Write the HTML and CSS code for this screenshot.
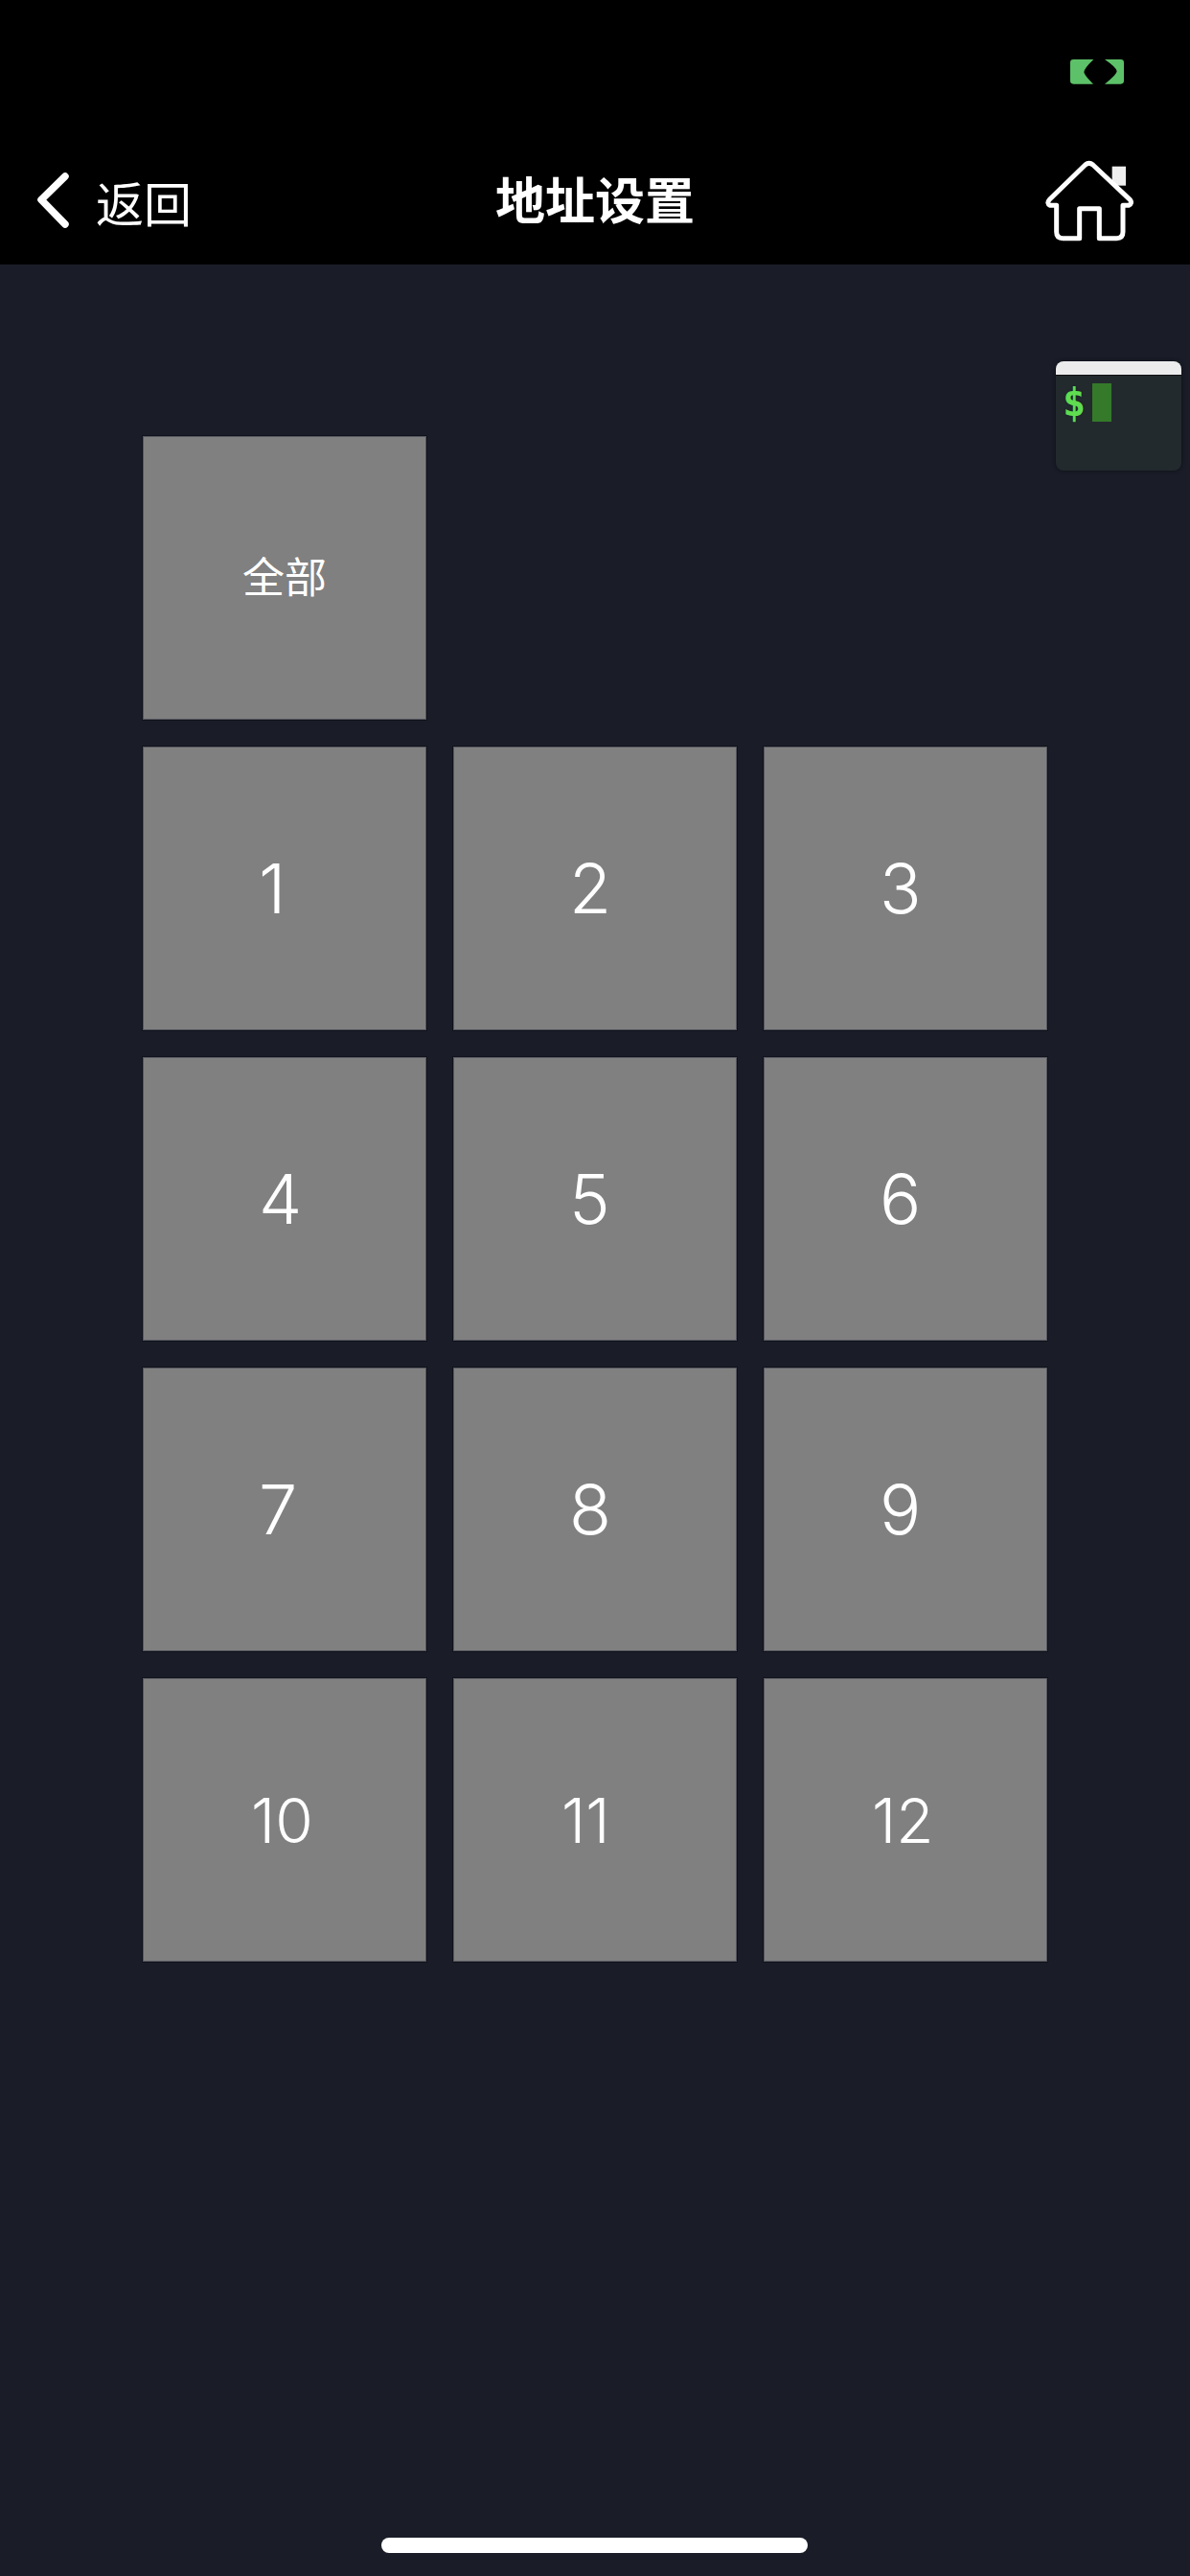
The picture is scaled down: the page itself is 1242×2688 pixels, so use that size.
FILE: index.html
```html
<!DOCTYPE html>
<html lang="zh-CN">
<head>
<meta charset="utf-8">
<title>地址设置</title>
<link rel="stylesheet" href="styles.css">
</head>
<body>
<div class="screen">
  <header class="header">
    <div class="status">
      <svg class="status-icon" viewBox="0 0 168 78" aria-hidden="true">
        <path d="M10 0H73Q42 30 43 40Q44 50 72 77H10Q0 77 0 67V10Q0 0 10 0Z"/>
        <path d="M108 0H158Q168 0 168 10V67Q168 77 158 77H108Q146 48 146 37Q146 26 108 0Z"/>
      </svg>
    </div>
    <nav class="nav">
      <div class="back">
        <svg class="chevron" viewBox="0 0 36 60" aria-hidden="true">
          <path d="M30 4L5 28.5L30 54"/>
        </svg>
        <span class="back-label">返回</span>
      </div>
      <h1 class="title">地址设置</h1>
      <div class="home-wrap">
        <svg class="home" viewBox="150 380 285 270" aria-hidden="true">
          <rect class="chimney" x="362" y="403" width="43" height="60"/>
          <path class="house" d="M278 398L166 507Q156 518 168 525H188V608Q188 628 208 628H260V535H322V628H376Q396 628 396 608V525H414Q427 518 418 507L302 398Q290 388 278 398Z"/>
        </svg>
      </div>
    </nav>
  </header>

  <main class="content">
    <div class="grid">
      <button class="cell cell-all">全部</button>
      <button class="cell cell-one row-start">1</button>
      <button class="cell cell-one">2</button>
      <button class="cell cell-one">3</button>
      <button class="cell cell-one">4</button>
      <button class="cell cell-one">5</button>
      <button class="cell cell-one">6</button>
      <button class="cell cell-one">7</button>
      <button class="cell cell-one">8</button>
      <button class="cell cell-one">9</button>
      <button class="cell cell-two">10</button>
      <button class="cell cell-two">11</button>
      <button class="cell cell-two">12</button>
    </div>
  </main>

  <div class="terminal">
    <div class="terminal-bar"></div>
    <div class="terminal-body">
      <span class="prompt">$</span>
      <span class="cursor"></span>
    </div>
  </div>

  <div class="home-indicator"></div>
</div>
</body>
</html>
```

FILE: styles.css
```css
* {
  box-sizing: border-box;
}

html,
body {
  margin: 0;
  padding: 0;
  background: #1a1d27;
}

.screen {
  position: relative;
  width: 1242px;
  height: 2688px;
  overflow: hidden;
  display: flex;
  flex-direction: column;
  background: #1a1d27;
  font-family: "Noto Sans CJK SC", "Inter", sans-serif;
  color: #fff;
}

.header {
  height: 276px;
  flex: none;
  display: flex;
  flex-direction: column;
  background: #000;
}

.status {
  height: 150px;
  flex: none;
  display: flex;
  justify-content: flex-end;
  padding: 62px 69px 0 0;
}

.status-icon {
  width: 56px;
  height: 26px;
  fill: #5cc168;
}

.nav {
  flex: 1;
  display: grid;
  grid-template-columns: 1fr auto 1fr;
  align-items: start;
}

.back {
  display: flex;
  align-items: center;
  height: 90px;
  padding: 30px 0 0 38px;
}

.chevron {
  width: 36px;
  height: 60px;
  fill: none;
  stroke: #fff;
  stroke-width: 7.5;
  stroke-linecap: round;
  stroke-linejoin: round;
}

.back-label {
  margin-left: 26px;
  font-size: 50px;
  font-weight: 400;
  line-height: 60px;
}

.title {
  margin: 0;
  padding-top: 21px;
  font-size: 52px;
  font-weight: 700;
  line-height: 72px;
}

.home-wrap {
  display: flex;
  justify-content: flex-end;
  padding: 16px 57px 0 0;
}

.home {
  width: 95px;
  height: 90px;
}

.chimney {
  fill: #eee;
}

.house {
  fill: #000;
  stroke: #fff;
  stroke-width: 15;
  stroke-linejoin: round;
}

.content {
  flex: 1;
  padding: 179px 0 0 149px;
}

.grid {
  display: grid;
  grid-template-columns: repeat(3, 296px);
  grid-auto-rows: 296px;
  gap: 28px;
}

.cell {
  margin: 0;
  padding: 0;
  border: 1px solid #55565f;
  border-radius: 0;
  background: #808080;
  box-shadow: 0 0 0 1px #10121b;
  color: #fff;
  font-family: "Inter", "Noto Sans CJK SC", sans-serif;
  font-weight: 350;
  display: flex;
  align-items: center;
  justify-content: flex-start;
}

.cell-all {
  justify-content: center;
  padding-bottom: 6px;
  font-family: "Noto Sans CJK SC", sans-serif;
  font-weight: 400;
  font-size: 44px;
}

.row-start {
  grid-column: 1;
}

.cell-one {
  font-size: 72px;
  padding-left: 120px;
  padding-bottom: 2px;
}

.cell-two {
  font-size: 64px;
  padding-left: 112px;
}

.terminal {
  position: absolute;
  left: 1102px;
  top: 377px;
  width: 131px;
  height: 114px;
  border-radius: 8px;
  overflow: hidden;
  background: #232a2e;
  box-shadow: 0 0 4px #0c0e14;
}

.terminal-bar {
  height: 15px;
  background: #ececec;
  border-bottom: 1px solid #111;
}

.terminal-body {
  display: flex;
  align-items: flex-start;
  gap: 7px;
  padding: 8px 0 0 7px;
}

.prompt {
  width: 24px;
  font-family: "DejaVu Sans Mono", monospace;
  font-size: 40px;
  font-weight: 700;
  line-height: 40px;
  color: #5fdc50;
  text-align: center;
  text-shadow: 0 0 2px #14161e;
}

.cursor {
  width: 20px;
  height: 40px;
  background: #357a2a;
}

.home-indicator {
  position: absolute;
  left: 398px;
  top: 2648px;
  width: 445px;
  height: 16px;
  border-radius: 8px;
  background: #fff;
}
```
